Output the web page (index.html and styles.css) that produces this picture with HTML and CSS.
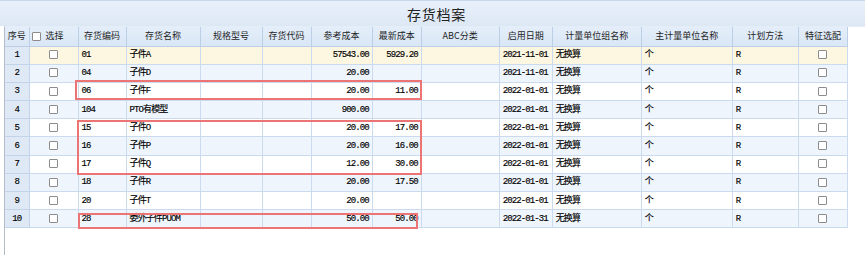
FILE: index.html
```html
<!DOCTYPE html>
<html lang="zh-CN">
<head>
<meta charset="utf-8">
<title>存货档案</title>
<link rel="stylesheet" href="styles.css">
</head>
<body>
<div class="page">
  <header class="titlebar">存货档案</header>
  <div class="panel">
    <table class="grid">
      <colgroup>
        <col style="width:24px"><col style="width:49px"><col style="width:48px"><col style="width:74px">
        <col style="width:62px"><col style="width:49px"><col style="width:61px"><col style="width:49px">
        <col style="width:78px"><col style="width:53px"><col style="width:89px"><col style="width:91px">
        <col style="width:66px"><col style="width:49px">
      </colgroup>
      <thead>
        <tr>
          <th>序号</th>
          <th class="selhead"><span class="cb"></span><span class="seltxt">选择</span></th>
          <th>存货编码</th><th>存货名称</th><th>规格型号</th><th>存货代码</th>
          <th>参考成本</th><th>最新成本</th><th>ABC分类</th><th>启用日期</th>
          <th>计量单位组名称</th><th>主计量单位名称</th><th>计划方法</th><th>特征选配</th>
        </tr>
      </thead>
      <tbody>
        <tr class="sel"><td class="seq">1</td><td class="c"><span class="cb"></span></td><td>01</td><td>子件A</td><td></td><td></td><td class="num">57543.00</td><td class="num">5929.20</td><td></td><td class="date">2021-11-01</td><td>无换算</td><td>个</td><td>R</td><td class="c"><span class="cb"></span></td></tr>
        <tr class="alt"><td class="seq">2</td><td class="c"><span class="cb"></span></td><td>04</td><td>子件D</td><td></td><td></td><td class="num">20.00</td><td class="num"></td><td></td><td class="date">2021-11-01</td><td>无换算</td><td>个</td><td>R</td><td class="c"><span class="cb"></span></td></tr>
        <tr><td class="seq">3</td><td class="c"><span class="cb"></span></td><td>06</td><td>子件F</td><td></td><td></td><td class="num">20.00</td><td class="num">11.00</td><td></td><td class="date">2022-01-01</td><td>无换算</td><td>个</td><td>R</td><td class="c"><span class="cb"></span></td></tr>
        <tr class="alt"><td class="seq">4</td><td class="c"><span class="cb"></span></td><td>104</td><td>PTO有模型</td><td></td><td></td><td class="num">900.00</td><td class="num"></td><td></td><td class="date">2022-01-01</td><td>无换算</td><td>个</td><td>R</td><td class="c"><span class="cb"></span></td></tr>
        <tr><td class="seq">5</td><td class="c"><span class="cb"></span></td><td>15</td><td>子件O</td><td></td><td></td><td class="num">20.00</td><td class="num">17.00</td><td></td><td class="date">2022-01-01</td><td>无换算</td><td>个</td><td>R</td><td class="c"><span class="cb"></span></td></tr>
        <tr class="alt"><td class="seq">6</td><td class="c"><span class="cb"></span></td><td>16</td><td>子件P</td><td></td><td></td><td class="num">20.00</td><td class="num">16.00</td><td></td><td class="date">2022-01-01</td><td>无换算</td><td>个</td><td>R</td><td class="c"><span class="cb"></span></td></tr>
        <tr><td class="seq">7</td><td class="c"><span class="cb"></span></td><td>17</td><td>子件Q</td><td></td><td></td><td class="num">12.00</td><td class="num">30.00</td><td></td><td class="date">2022-01-01</td><td>无换算</td><td>个</td><td>R</td><td class="c"><span class="cb"></span></td></tr>
        <tr class="alt"><td class="seq">8</td><td class="c"><span class="cb"></span></td><td>18</td><td>子件R</td><td></td><td></td><td class="num">20.00</td><td class="num">17.50</td><td></td><td class="date">2022-01-01</td><td>无换算</td><td>个</td><td>R</td><td class="c"><span class="cb"></span></td></tr>
        <tr><td class="seq">9</td><td class="c"><span class="cb"></span></td><td>20</td><td>子件T</td><td></td><td></td><td class="num">20.00</td><td class="num"></td><td></td><td class="date">2022-01-01</td><td>无换算</td><td>个</td><td>R</td><td class="c"><span class="cb"></span></td></tr>
        <tr class="alt"><td class="seq">10</td><td class="c"><span class="cb"></span></td><td>28</td><td>委外子件PUOM</td><td></td><td></td><td class="num">50.00</td><td class="num">50.00</td><td></td><td class="date">2022-01-31</td><td>无换算</td><td>个</td><td>R</td><td class="c"><span class="cb"></span></td></tr>
      </tbody>
    </table>
  </div>
  <div class="mark mark-a"></div>
  <div class="mark mark-b"></div>
  <div class="mark mark-c"></div>
</div>
</body>
</html>
```
FILE: styles.css
```css
html, body {
  margin: 0;
  padding: 0;
  background: #ffffff;
}
.page {
  position: relative;
  width: 865px;
  height: 255px;
  overflow: hidden;
  font-family: "Noto Sans CJK SC", "Noto Sans", sans-serif;
  color: #1e1e1e;
}
.titlebar {
  height: 26px;
  box-sizing: border-box;
  padding: 2px 0 0 8px;
  border-top: 1px solid #c9d7ea;
  background: linear-gradient(#e8f0fa, #dde8f5);
  font-size: 14px;
  line-height: 22px;
  text-align: center;
  color: #222222;
  letter-spacing: 0.7px;
}
.panel {
  margin-left: 4px;
  border-left: 1px solid #b3bcc8;
  border-top: 1px solid #e6edf6;
  height: 229px;
  box-sizing: border-box;
}
.grid {
  table-layout: fixed;
  width: 843px;
  border-collapse: collapse;
  border-right: 1px solid #8897ab;
  border-bottom: 1px solid #8a99ae;
}
.grid thead tr { height: 19px; }
.grid tbody tr { height: 18.2px; }
.grid th {
  padding: 0;
  background: linear-gradient(#e4eefa, #d9e6f5);
  border: 1px solid #bccfe7;
  border-top: none;
  font-size: 9px;
  line-height: 12px;
  font-weight: normal;
  color: #1f1f1f;
  text-align: center;
  white-space: nowrap;
  overflow: hidden;
}
.grid th:first-child { border-left: none; }
.selhead {
  position: relative;
}
.selhead .cb {
  position: absolute;
  left: 2px;
  top: 5px;
}
.seltxt { padding-left: 2px; }
.grid td {
  padding: 0 2px 0 3px;
  border: 1px solid #cbdaee;
  font-family: "Liberation Mono", "Noto Sans CJK SC", monospace;
  font-size: 9px;
  letter-spacing: -0.9px;
  line-height: 12px;
  white-space: nowrap;
  overflow: hidden;
  color: #000000;
  -webkit-text-stroke: 0.15px #000000;
}
.grid td:first-child { border-left: none; }
.grid tr.alt td { background: #eff5fd; }
.grid tr.sel td { background: #fdf7e2; }
.grid td.seq {
  background: #dfe9f6 !important;
  text-align: center;
  padding: 0;
  border-color: #c2d3ea;
}
.grid td.num { text-align: right; padding-right: 3px; }
.grid td.date { padding-left: 3px; }
.grid td.c { text-align: center; padding: 0; }
.cb {
  display: inline-block;
  width: 7px;
  height: 7px;
  border: 1px solid #8c8c8c;
  background: #ffffff;
  vertical-align: middle;
  border-radius: 1px;
  -webkit-text-stroke: 0;
}
.mark {
  position: absolute;
  border: 2px solid #ec7474;
  box-sizing: border-box;
  pointer-events: none;
}
.mark-a { left: 75px; top: 80px; width: 347px; height: 20px; }
.mark-b { left: 77px; top: 120px; width: 345px; height: 55px; }
.mark-c { left: 78px; top: 213px; width: 340px; height: 16px; }
```
